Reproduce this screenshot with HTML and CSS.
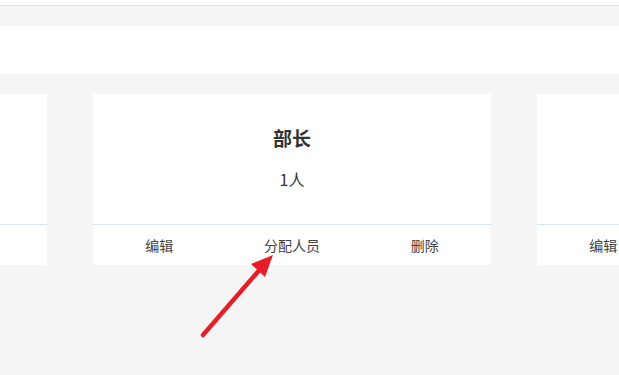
FILE: index.html
```
<!DOCTYPE html>
<html lang="zh-CN">
<head>
    <meta charset="UTF-8">
    <meta name="viewport" content="width=device-width, initial-scale=1.0">
    <title>角色管理</title>
    <link rel="stylesheet" href="styles.css">
</head>
<body>

    <div class="top-line"></div>
    <div class="toolbar"></div>

    <div class="role-list">
        <div class="role-card">
            <div class="role-info">
                <div class="role-name">干事</div>
                <div class="role-count">3人</div>
            </div>
            <div class="role-actions">
                <span>编辑</span>
                <span>分配人员</span>
                <span>删除</span>
            </div>
        </div>
        <div class="role-card">
            <div class="role-info">
                <div class="role-name">部长</div>
                <div class="role-count">1人</div>
            </div>
            <div class="role-actions">
                <span>编辑</span>
                <span>分配人员</span>
                <span>删除</span>
            </div>
        </div>
        <div class="role-card">
            <div class="role-info">
                <div class="role-name">副部长</div>
                <div class="role-count">2人</div>
            </div>
            <div class="role-actions">
                <span>编辑</span>
                <span>分配人员</span>
                <span>删除</span>
            </div>
        </div>
    </div>

    <!-- annotation arrow -->
    <svg class="arrow" width="619" height="375" viewBox="0 0 619 375">
        <line x1="203" y1="335" x2="262" y2="267" stroke="#e61e28" stroke-width="4.5" stroke-linecap="round"/>
        <polygon points="273,255 251,264 265,277" fill="#e61e28"/>
    </svg>

</body>
</html>
```

FILE: styles.css
```
body {
    margin: 0;
    font-family: "Noto Sans CJK SC", "Liberation Sans", sans-serif;
    background-color: #f5f5f5;
    overflow: hidden;
    height: 375px;
}

.top-line {
    height: 5px;
    background-color: #fff;
    border-bottom: 1px solid #dedede;
}

.toolbar {
    height: 48px;
    margin-top: 20px;
    background-color: #fff;
}

.role-list {
    display: flex;
    gap: 46px;
    margin: 20px 0 0 -351px;
}

.role-card {
    flex: 0 0 398px;
    background-color: #fff;
}

.role-info {
    height: 130px;
    display: flex;
    flex-direction: column;
    align-items: center;
    border-bottom: 1px solid #d5e5fb;
}

.role-name {
    margin-top: 31px;
    font-size: 19px;
    font-weight: bold;
    color: #333;
    line-height: 26px;
}

.role-count {
    margin-top: 17px;
    font-size: 16px;
    color: #333;
    line-height: 22px;
}

.role-actions {
    display: grid;
    grid-template-columns: repeat(3, 1fr);
    height: 40px;
    align-items: center;
    text-align: center;
    font-size: 14px;
    color: #444;
}

.arrow {
    position: absolute;
    top: 0;
    left: 0;
}
```
